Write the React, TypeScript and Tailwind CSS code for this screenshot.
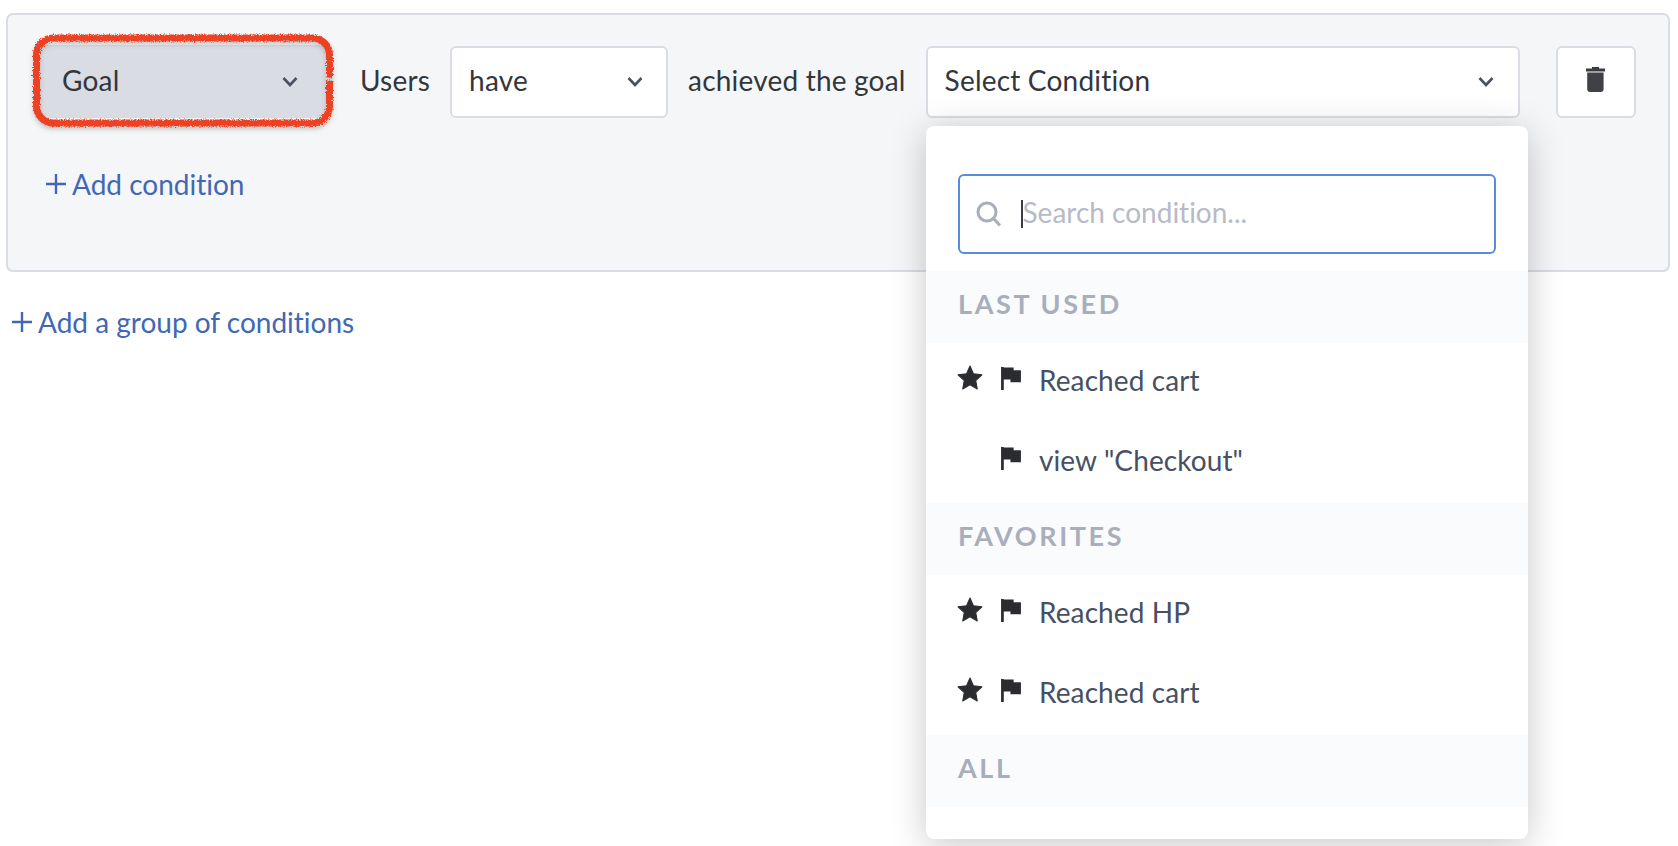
const font = { fontFamily: '"Lato", "Open Sans", sans-serif' };

function Chevron() {
  return (
    <svg width="16" height="12" viewBox="0 0 16 12" fill="none" className="shrink-0">
      <polyline points="1.5,2 8,9 14.5,2" stroke="#4a5163" strokeWidth="2.6" />
    </svg>
  );
}

function Flag() {
  return (
    <svg width="20" height="23" viewBox="0 0 19 22" className="shrink-0">
      <path d="M0 0h2.6v22H0zM2.6 0.5h9.4v2.5H19v11.5H9v-2.5H2.6z" fill="#2b2c30" />
    </svg>
  );
}

function Star() {
  return (
    <svg width="26" height="25" viewBox="0 0 25 24" className="shrink-0">
      <polygon
        points="12.5,1 15.8,8.3 24,9.4 18,15 19.5,23 12.5,19 5.5,23 7,15 1,9.4 9.2,8.3"
        fill="#2b2c30"
        stroke="#2b2c30"
        strokeWidth="1"
        strokeLinejoin="round"
      />
    </svg>
  );
}

function Trash() {
  return (
    <svg width="19" height="25" viewBox="0 0 19 25">
      <path d="M6 0h7v1.5h6V4.5H0V1.5h6z" fill="#3a3c42" />
      <path d="M1.2 5.6h16.4V22a3 3 0 0 1-3 3H4.2a3 3 0 0 1-3-3z" fill="#3f4147" />
    </svg>
  );
}

function Item({ star, label }: { star?: boolean; label: string }) {
  return (
    <div className="flex h-[80px] items-center pl-[31px]">
      <div className="flex w-[44px] -translate-y-[6px] justify-start">
        {star ? <Star /> : null}
      </div>
      <div className="flex w-[38px] -translate-y-[5px]">
        <Flag />
      </div>
      <span className="-translate-y-[3px] text-[28px] tracking-[0.1px] text-[#475063]">{label}</span>
    </div>
  );
}

function SectionHeader({ label }: { label: string }) {
  return (
    <div className="flex h-[72px] items-center bg-[#fafbfd] pl-[32px] text-[27px] font-bold tracking-[2.6px] text-[#a8aebc]">
      <span className="-translate-y-[3px]">{label}</span>
    </div>
  );
}

function Select({ label, className }: { label: string; className: string }) {
  return (
    <div className={`flex h-[72px] items-center justify-between rounded-[6px] border-2 border-[#d9dce3] bg-white pl-[17px] text-[28px] tracking-[0.2px] text-[#33363c] ${className}`}>
      <span className="-translate-y-[2px]">{label}</span>
      <Chevron />
    </div>
  );
}

function AddLink({ label }: { label: string }) {
  return (
    <div className="flex items-center gap-[6px] text-[28px] text-[#4268b3]">
      <svg width="20" height="20" viewBox="0 0 20 20" className="shrink-0">
        <path d="M10 0v20M0 10h20" stroke="#4268b3" strokeWidth="2.4" />
      </svg>
      <span className="[font-variant-ligatures:none]">{label}</span>
    </div>
  );
}

export default function App() {
  return (
    <div className="relative h-[846px] w-[1678px] overflow-hidden bg-white" style={font}>
      <div className="ml-[6px] mt-[13px] h-[259px] w-[1664px] rounded-[7px] border-2 border-[#d9dce3] bg-[#f5f6f8]">
        <div className="flex items-center pl-[32px] pt-[30px]">
          <div className="relative mr-[34px] flex h-[73px] w-[286px] items-center justify-between rounded-[6px] bg-[#d9dce3] pl-[22px] pr-[28px] text-[28px] tracking-[0.2px] text-[#33363c]">
            <span className="-translate-y-[2px]">Goal</span>
            <Chevron />
            <svg className="pointer-events-none absolute -left-[12px] -top-[16px] overflow-visible" width="310" height="105" viewBox="0 0 310 105" fill="none">
              <defs>
                <filter id="rough" x="-5%" y="-15%" width="110%" height="130%">
                  <feTurbulence type="fractalNoise" baseFrequency="0.8" numOctaves="2" seed="4" />
                  <feDisplacementMap in="SourceGraphic" scale="5" />
                </filter>
                <filter id="drop" x="-5%" y="-15%" width="110%" height="130%">
                  <feGaussianBlur stdDeviation="2.5" />
                </filter>
              </defs>
              <rect x="8.5" y="9" width="293" height="85" rx="17" stroke="#555" strokeOpacity="0.35" strokeWidth="6" filter="url(#drop)" transform="translate(0 3)" />
              <rect x="8.5" y="9" width="293" height="85" rx="17" stroke="#ee4023" strokeWidth="7" strokeDasharray="308 3 1000" filter="url(#rough)" />
            </svg>
          </div>
          <span className="mr-[20px] -translate-y-[2px] text-[28px] tracking-[0.2px] text-[#33363c]">Users</span>
          <Select label="have" className="mr-[20px] w-[218px] pr-[23px]" />
          <span className="mr-[20px] -translate-y-[2px] text-[28px] tracking-[0.2px] text-[#33363c]">achieved the goal</span>
          <Select label="Select Condition" className="mr-[36px] w-[594px] pr-[24px]" />
          <div className="flex h-[72px] w-[80px] items-center justify-center rounded-[6px] border-2 border-[#d9dce3] bg-white">
            <div className="flex -translate-y-[2px]">
              <Trash />
            </div>
          </div>
        </div>
        <div className="pl-[38px] pt-[45px]">
          <AddLink label="Add condition" />
        </div>
      </div>
      <div className="ml-[12px] mt-[29px]">
        <AddLink label="Add a group of conditions" />
      </div>

      <div className="absolute left-[926px] top-[126px] w-[602px] rounded-[8px] bg-white pb-[32px] shadow-[0_6px_36px_rgba(0,0,0,0.22)]">
        <div className="px-[32px] pb-[17px] pt-[48px]">
          <div className="flex h-[80px] w-[538px] items-center rounded-[6px] border-2 border-[#5a8adb] bg-white pl-[16px]">
            <svg width="26" height="26" viewBox="0 0 26 26" fill="none" className="shrink-0">
              <circle cx="11" cy="11" r="9" stroke="#a8aebc" strokeWidth="3" />
              <path d="M17.5 17.5L24 24.5" stroke="#a8aebc" strokeWidth="3" />
            </svg>
            <div className="ml-[19px] h-[28px] w-[1.5px] bg-[#3a3c42]" />
            <span className="-translate-y-[2px] text-[28px] text-[#b6bbc7] [font-variant-ligatures:none]">Search condition...</span>
          </div>
        </div>
        <SectionHeader label="LAST USED" />
        <Item star label="Reached cart" />
        <Item label='view "Checkout"' />
        <SectionHeader label="FAVORITES" />
        <Item star label="Reached HP" />
        <Item star label="Reached cart" />
        <SectionHeader label="ALL" />
      </div>
    </div>
  );
}
